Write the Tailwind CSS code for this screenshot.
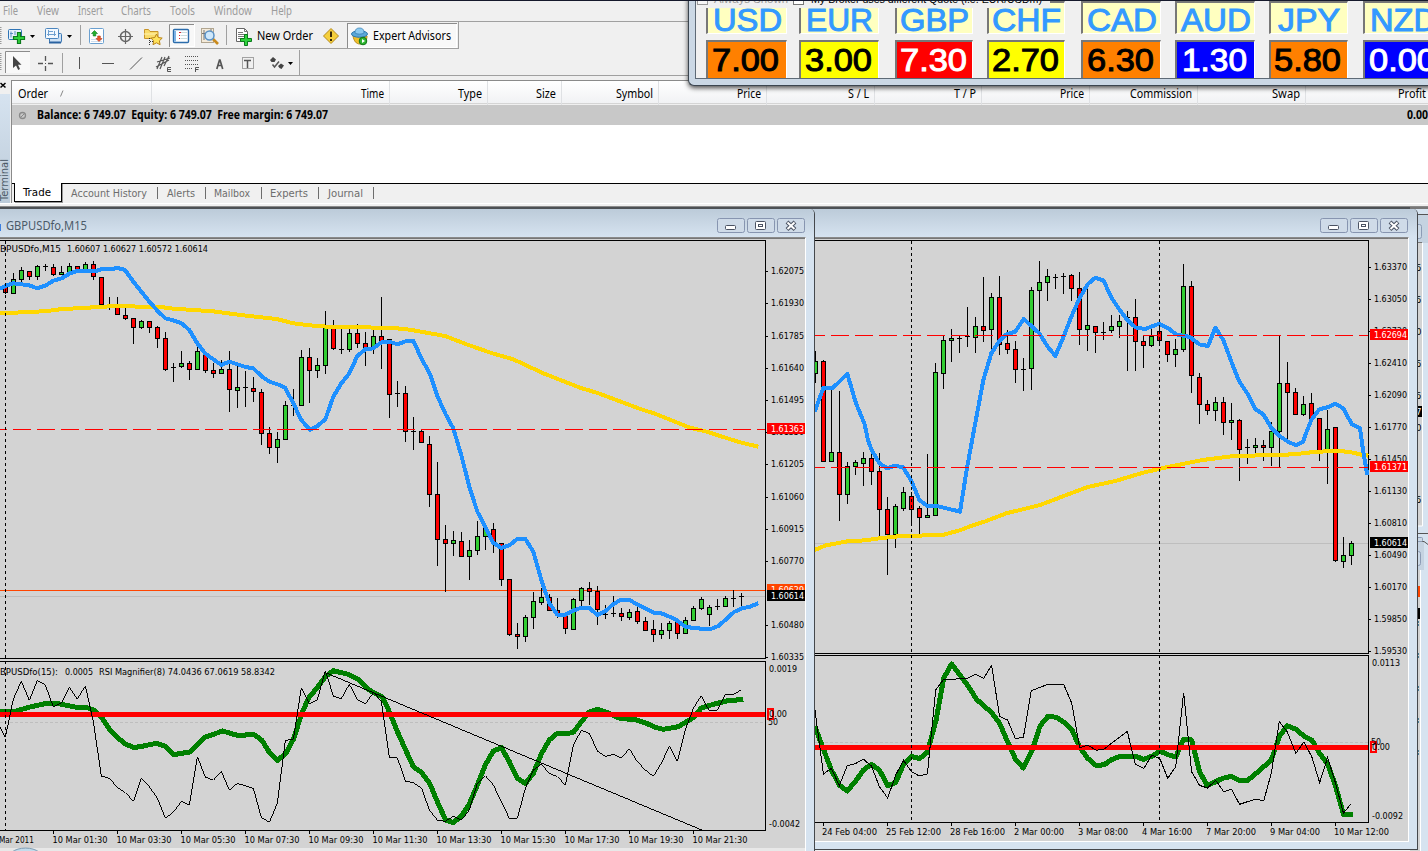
<!DOCTYPE html>
<html lang="en">
<head>
<meta charset="utf-8">
<title>Trading terminal</title>
<script src="https://cdn.jsdelivr.net/npm/@tailwindcss/browser@4"></script>
</head>
<body class="w-[1428px] h-[851px] overflow-hidden bg-[#f0f0f0] font-['Noto_Sans','Open_Sans',sans-serif] text-[12px] text-black">
<div class="relative flex flex-col w-[1428px] h-[851px] overflow-hidden border-t border-[#15192b]">

  <!-- Menu -->
  <nav class="flex items-center h-[21px] shrink-0 border-b border-[#a0a0a0] pl-[3px] text-[12px] leading-none text-[#9c9c9c] whitespace-nowrap">
    <span class="w-[34px]"><span data-w="15">File</span></span>
    <span class="w-[41px]"><span data-w="22">View</span></span>
    <span class="w-[43px]"><span data-w="25">Insert</span></span>
    <span class="w-[49px]"><span data-w="30">Charts</span></span>
    <span class="w-[44px]"><span data-w="25">Tools</span></span>
    <span class="w-[57px]"><span data-w="38">Window</span></span>
    <span data-w="21">Help</span>
  </nav>

  <!-- Standard toolbar -->
  <div class="flex h-[27px] shrink-0 w-[459px] border-b border-r border-[#a0a0a0]">
    <svg class="w-[40px] h-[26px]" viewBox="0 22 40 26">
      <path d="M.5 27v18" stroke="#999" stroke-width="2" stroke-dasharray="1 1"/>
      <rect x="8.500" y="29.500" width="13" height="10" rx="1" fill="#e6f1fb" stroke="#2f74b5"/><path d="M11 31.500v6M10 33.500h3M15 31v4M14 36.500h4" stroke="#5b8fc2" fill="none"/>
      <path d="M17.500 32.500h3v4h4v3h-4v4h-3v-4h-4v-3h4z" fill="#2fd13c" stroke="#0b7a1c" stroke-width="1.200"/>
      <path d="M30 35h5l-2.500 3z" fill="#000"/>
    </svg>
    <svg class="w-[37px] h-[26px]" viewBox="40 22 37 26">
      <rect x="49.500" y="33.500" width="12" height="9" rx="1" fill="#cfe2f5" stroke="#3b78b4"/><path d="M49 42.500h12" stroke="#2a62a0" stroke-width="2"/>
      <rect x="45.500" y="28.500" width="13" height="10" rx="1" fill="#f2f8fe" stroke="#4c86bf"/><path d="M48.500 30v6M47 34.500h9M48 31.500h5M54.500 31v5" stroke="#6fa0d0" fill="none"/>
      <path d="M67 35h5l-2.500 3z" fill="#000"/>
    </svg>
    <svg class="w-[92px] h-[26px]" viewBox="77 22 92 26">
      <path d="M80.500 25v20" stroke="#a0a0a0"/>
      <rect x="89.500" y="28.500" width="14" height="15" rx="1" fill="#fff" stroke="#6ba0d0"/><path d="M91 41.500h11M91 39.500h11" stroke="#cfdded"/>
      <path d="M94.500 30.500l3 3h-1.700v2.500h-2.600v-2.500h-1.700z" fill="#22b02c" stroke="#137a1c" stroke-width=".6"/><path d="M99 41.500l-3-3h1.700V36h2.600v2.500h1.700z" fill="#f0552a" stroke="#b3330f" stroke-width=".6"/>
      <circle cx="125.500" cy="36.500" r="5" fill="none" stroke="#666" stroke-width="1.600"/><path d="M125.500 29v15M118 36.500h15" stroke="#666" stroke-width="1.200"/>
      <path d="M144.500 38.500v-9h4l1.500 2h8v7z" fill="#f9dc6b" stroke="#c8952a"/><path d="M144 34h13" stroke="#fff3b4"/><path d="M149.500 38v7M150 41.500h4" stroke="#333" stroke-dasharray="1 1"/>
      <path d="M156.500 34l1.800 3.500 3.900.6-2.800 2.700.7 3.900-3.600-1.900-3.500 1.900.7-3.900-2.800-2.700 3.900-.6z" fill="#ffe35c" stroke="#b98316"/>
    </svg>
    <svg class="w-[60px] h-[26px]" viewBox="169 22 60 26">
      <rect x="169.500" y="24.500" width="25" height="22" fill="#f8f8f8" stroke="#fff"/><path d="M169.500 47V24.500H194" stroke="#8c8c8c" fill="none"/>
      <rect x="173.500" y="29.500" width="15" height="13" rx="1" fill="#fff" stroke="#2b6cab" stroke-width="1.400"/><path d="M175 31v10.500" stroke="#7db3e6" stroke-width="2"/><path d="M179 32.500h2M179 35.500h1M179 38.500h1" stroke="#d23"/><path d="M181 32.500h6M180.500 35.500h7M180.500 38.500h7" stroke="#cdd"/>
      <rect x="201.500" y="28.500" width="12" height="14" fill="#f4ead9" stroke="#b0a590"/><path d="M204 30v10M202 33.500h3M211 29v5" stroke="#777"/>
      <path d="M213 39l5 5" stroke="#c98a1c" stroke-width="2.600"/><circle cx="209.500" cy="35.500" r="4.500" fill="#cfe8fb" stroke="#5990c4" stroke-width="1.500"/>
      <path d="M226.500 25v20" stroke="#a0a0a0"/>
    </svg>
    <svg class="w-[28px] h-[26px]" viewBox="229 22 28 26">
      <path d="M236.500 28.500h8l3 3v10h-11z" fill="#fff" stroke="#666"/><path d="M244.500 28.500v3h3M238 32.500h5M238 34.500h7M238 36.500h7M238 38.500h4" stroke="#777" fill="none"/>
      <path d="M244.500 34.500h3v4h4v3h-4v4h-3v-4h-4v-3h4z" fill="#2fd13c" stroke="#0b7a1c"/>
    </svg>
    <div class="w-[57px] pt-[6px] text-[12px] leading-[16px] whitespace-nowrap"><span data-w="56">New Order</span></div>
    <svg class="w-[33px] h-[26px]" viewBox="314 22 33 26">
      <path d="M331 28.500l7.500 7.500-7.500 7.500-7.500-7.500z" fill="#f5cf3c" stroke="#b58a1c" stroke-linejoin="round"/><path d="M331 31.500v5.500M331 39v2" stroke="#3c2c08" stroke-width="2"/>
    </svg>
    <div class="flex h-[25px] w-[110px] mt-px bg-[#f8f8f8] border-t border-l border-[#8c8c8c] shadow-[inset_-1px_-1px_0_#fff]">
      <svg class="w-[25px] h-[24px] shrink-0" viewBox="348 24 25 24">
        <path d="M353 36c1 5 3 8 7 8 5 0 7-4 7-8z" fill="#f0bf2c" stroke="#b58a1c"/><ellipse cx="359.500" cy="34" rx="8" ry="3.300" fill="#5aa7d8" stroke="#2f78ad"/><path d="M355 33c0-4 2-5 4.500-5s4.500 1 4.500 5c-2 1.500-7 1.500-9 0z" fill="#8ccaf0" stroke="#2f78ad" stroke-width=".7"/>
        <circle cx="363" cy="41" r="3.800" fill="#2db52f" stroke="#0d7515"/><path d="M362 39v4l3-2z" fill="#fff"/>
      </svg>
      <div class="pt-[4px] text-[12px] leading-[16px] whitespace-nowrap"><span data-w="78">Expert Advisors</span></div>
    </div>
  </div>

  <!-- Line studies toolbar -->
  <div class="flex h-[27px] shrink-0 border-b border-[#a0a0a0]">
    <svg class="w-[300px] h-[26px]" viewBox="0 49 300 26" fill="none" stroke="#555">
      <path d="M.5 53v18" stroke="#999" stroke-width="2" stroke-dasharray="1 1"/>
      <rect x="5" y="51" width="25" height="22" fill="#f8f8f8" stroke="none"/><path d="M5.500 73V51.500H30" stroke="#8c8c8c"/>
      <path d="M13 56v12l3-2.500 2.200 4.500 1.800-1-2-4.300h3.500z" fill="#444" stroke="none"/>
      <path d="M45.500 56v5M45.500 66v5M38 63.500h5M48 63.500h5" stroke-width="1.300"/><path d="M45 63.500h1"/>
      <path d="M62.500 53v20" stroke="#a0a0a0"/>
      <path d="M79.500 57v12M102 63.500h12M130 69.500l12-12"/>
      <path d="M156 67l13-7M157 62l13-4M157 69l5-12M160 69l5-12M164 66l5-10" stroke-width="1.200"/>
      <path d="M171 67.500h-3.500v4h3.500M168 69.500h3" />
      <path d="M185 56.500h14M185 60.500h14M185 64.500h14M185 68.500h8" stroke-dasharray="1 1"/><path d="M195.500 72v-4.500h3.500M196 69.500h2.500"/>
      <path d="M216.800 69l2.700-9h.5l2.700 9M217.500 65.500h4.500" stroke-width="1.700"/>
      <rect x="242.500" y="57.500" width="11" height="11" stroke-dasharray="1 1"/><path d="M244 60.500h7M247.500 60.500V68" stroke-width="1.500"/>
      <path d="M270 60l3-3 3 2.500-1.500 2.500h-3zM278 66l3-2.500 3 2-2.500 3.500-2-1z" fill="#444" stroke="none"/><path d="M272.500 64.500l2 2.500 4.500-5.500" stroke-width="1.500"/>
      <path d="M288 62h5l-2.500 3z" fill="#000" stroke="none"/>
      <path d="M299.500 50v25" stroke="#a0a0a0"/>
    </svg>
  </div>

  <!-- Terminal -->
  <section class="flex h-[123px] mt-[4px] shrink-0">
    <div class="w-[11px] shrink-0 flex flex-col">
      <svg class="w-[11px] h-[14px]" viewBox="0 80 11 14"><path d="M.5 83l5 4.500M5.500 83l-5 4.500" stroke="#000" stroke-width="1.500"/></svg>
      <svg class="w-[10px] h-[109px]" viewBox="0 94 10 109">
        <defs><linearGradient id="side" x2="0" y2="1"><stop stop-color="#d6e3f0"/><stop offset="1" stop-color="#bccbd9"/></linearGradient></defs>
        <rect y="94" width="10" height="109" fill="url(#side)"/>
        <text transform="translate(8 201) rotate(-90)" textLength="42" lengthAdjust="spacingAndGlyphs" font-size="11" fill="#4a5866" font-family="DejaVu Sans Condensed, DejaVu Sans, sans-serif">Terminal</text>
      </svg>
    </div>
    <div class="flex-1 flex flex-col border-l border-t border-[#8a8a8a]">
      <div class="grid grid-cols-[140px_238px_98px_74px_97px_108px_108px_107px_108px_108px_108px_122px] h-[23px] bg-gradient-to-b from-white to-[#f1f2f4] border-b border-[#d5d5d5] text-[12px] leading-[25px] text-right whitespace-nowrap *:border-r *:border-[#dfe1e4] *:pr-[5px]">
        <div class="flex gap-[12px] pl-[6px]"><span data-w="30">Order</span><svg class="w-[6px] h-[7px] mt-[9px]" viewBox="0 0 6 7"><path d="M.5 6.500L3 .5" stroke="#888" fill="none"/></svg></div>
        <div><span data-w="23">Time</span></div><div><span data-w="24">Type</span></div><div><span data-w="20">Size</span></div><div><span data-w="37">Symbol</span></div><div><span data-w="24">Price</span></div><div><span data-w="21">S / L</span></div><div><span data-w="22">T / P</span></div><div><span data-w="24">Price</span></div><div><span data-w="62">Commission</span></div><div><span data-w="28">Swap</span></div><div class="!pr-[2px] !border-r-0"><span data-w="28">Profit</span></div>
      </div>
      <div class="flex items-center h-[20px] mt-px bg-[#c8c8c8] text-[12px] font-bold whitespace-pre leading-[16px]">
        <svg class="w-[25px] h-[20px]" viewBox="12 105 25 20"><circle cx="22.500" cy="115.500" r="3" fill="none" stroke="#8a8a8a" stroke-width="1.300"/><path d="M20.500 117.500l4-4" stroke="#8a8a8a"/></svg>
        <span data-w="291">Balance: 6 749.07  Equity: 6 749.07  Free margin: 6 749.07</span>
        <span class="ml-auto" data-w="21">0.00</span>
      </div>
      <div class="flex-1 bg-white border-b border-black"></div>
      <div class="flex items-start h-[19px] text-[11px] leading-[19px] text-[#6d6d6d] font-['DejaVu_Sans_Condensed','DejaVu_Sans',sans-serif] whitespace-nowrap">
        <div class="h-[19px] -mt-px ml-[2px] w-[48px] bg-white border-x border-b border-black pl-[8px] text-black leading-[20px] shadow-[1px_1px_0_#999]"><span data-w="28">Trade</span></div>
        <span class="w-[86px] ml-[9px]"><span data-w="76">Account History</span></span>
        <span class="h-[12px] w-px mt-[3px] bg-[#6d6d6d]"></span><span class="w-[47px] pl-[9px]"><span data-w="28">Alerts</span></span>
        <span class="h-[12px] w-px mt-[3px] bg-[#6d6d6d]"></span><span class="w-[55px] pl-[8px]"><span data-w="36">Mailbox</span></span>
        <span class="h-[12px] w-px mt-[3px] bg-[#6d6d6d]"></span><span class="w-[56px] pl-[8px]"><span data-w="38">Experts</span></span>
        <span class="h-[12px] w-px mt-[3px] bg-[#6d6d6d]"></span><span class="w-[54px] pl-[9px]"><span data-w="35">Journal</span></span>
        <span class="h-[12px] w-px mt-[3px] bg-[#6d6d6d]"></span>
      </div>
    </div>
  </section>
  <div class="h-[3px] shrink-0 border-t border-white"></div>

  <!-- Chart windows -->
  <main class="relative flex-1 border-t border-[#8a8a8a] bg-[#f0f0f0]">
    <div class="absolute left-0 top-0 w-full h-[2px] bg-[#4c5054]"></div>

    <!-- Windows further back, visible at the right edge -->
    <svg class="absolute left-[1410px] top-0 w-[18px] h-[644px]" viewBox="1410 207 18 644">
      <rect x="1410" y="207" width="18" height="644" fill="#d6e3f0"/>
      <rect x="1410" y="207" width="18" height="2" fill="#777"/>
      <rect x="1417" y="214" width="11" height="1" fill="#555"/>
      <rect x="1410" y="215" width="18" height="28" fill="#c5d3e1"/>
      <rect x="1410.500" y="224.500" width="11" height="14" rx="2" fill="#ccd9e6" stroke="#8c9cb5"/>
      <rect x="1410" y="243" width="13" height="283" fill="#d3d3d3"/><path d="M1422.500 243v283H1410" stroke="#fff" fill="none"/><path d="M1410 242.500h12" stroke="#777"/>
      <rect x="1410" y="406" width="12" height="11" fill="#000"/>
      <g font-family="DejaVu Sans Condensed, sans-serif" font-size="9.500"><text x="1416" y="271">5</text><text x="1416" y="303">5</text><text x="1416" y="335">0</text><text x="1416" y="367">5</text><text x="1416" y="399">5</text><text x="1416" y="415" fill="#fff">7</text><text x="1416" y="431">0</text><text x="1416" y="503">5</text></g>
      <path d="M1410 533.500h18M1417 541.500h7l4 3" stroke="#555" fill="none"/><rect x="1410" y="542" width="14" height="28" fill="#c5d3e1"/><rect x="1410.500" y="551.500" width="10" height="14" rx="2" fill="#ccd9e6" stroke="#8c9cb5"/><rect x="1410.500" y="537.500" width="12" height="4" rx="1" fill="#ccd9e6" stroke="#8c9cb5"/>
      <rect x="1410" y="570" width="11" height="281" fill="#d3d3d3"/><path d="M1420.500 570v281" stroke="#fff"/>
      <rect x="1410" y="586" width="10" height="11" fill="#ff4500"/><rect x="1410" y="608" width="10" height="11" fill="#000"/>
      <path d="M1418.500 621v6M1418.500 653v6M1418.500 686v6M1418.500 718v6M1418.500 750v6" stroke="#4a7d96" stroke-dasharray="2 1"/>
    </svg>

    <!-- H4 chart window -->
    <article class="absolute left-[800px] top-[2px] w-[618px] h-[641px] bg-[#d6e3f0] border-r border-b border-[#45484c] rounded-tr-[5px] flex flex-col">
      <header class="h-[28px] shrink-0 bg-gradient-to-b from-[#bccbd9] to-[#d6e3f0] rounded-tr-[5px] flex justify-end gap-[2px] pt-[9px] pr-[9px]">
        <svg class="w-[88px] h-[15px]" viewBox="0 0 88 15"><use href="#winbtns"/></svg>
      </header>
      <svg class="w-[609px] h-[605px] border-t border-t-[#8a8a8a] border-r border-b border-r-white border-b-white" viewBox="800 238 608 603" id="right">
        <rect x="800" y="238" width="609" height="604" fill="#d3d3d3"/>
        <path d="M800 238.500h609" stroke="#777"/>
        <path d="M800 240.500h568.500v413H800M800 655.500h568.500v167H800" fill="none" stroke="#000" shape-rendering="crispEdges"/>
        <path d="M800 543.500h568" stroke="#bebebe"/>
        <g id="candlesR" shape-rendering="crispEdges"></g>
        <g fill="none" shape-rendering="crispEdges">
          <g transform="translate(806 430) scale(.39667 .33333)"><polyline vector-effect="non-scaling-stroke" stroke="#ffd700" stroke-width="4" points="22,360 50,346 105,334 150,331 185,325 240,318 345,315 390,300 420,286 450,275 505,250 590,225 650,198 710,171 780,153 850,128 900,114 950,102 1000,90 1080,78 1150,76 1230,73 1280,66 1340,62 1375,67 1400,74 1418,77"/></g>
          <g transform="translate(806 200) scale(.33333)"><polyline vector-effect="non-scaling-stroke" stroke="#1e90ff" stroke-width="4" stroke-linejoin="round" points="26,635 52,564 80,564 124,522 150,610 175,670 186,720 196,748 220,790 244,805 268,797 291,802 316,842 340,900 364,918 393,918 462,935 482,810 502,700 532,540 556,460 580,423 600,404 628,395 653,357 700,400 725,440 748,468 772,412 796,350 820,296 845,253 868,233 893,242 916,293 940,328 964,360 988,382 1017,387 1060,371 1087,385 1110,403 1152,411 1180,433 1206,438 1228,383 1252,420 1276,485 1300,545 1324,580 1349,628 1372,643 1396,683 1422,709 1446,725 1470,736 1491,725 1500,700 1516,660 1540,628 1564,622 1588,611 1612,625 1637,672 1662,685 1671,750 1684,825"/></g>
          <path d="M807 335.500h561M807 467.500h561" stroke="#f00" stroke-dasharray="18 6"/>
          <path d="M800 742.500h568" stroke="#bebebe" stroke-dasharray="3 2"/>
          <g transform="translate(806 640) scale(.39667 .33333)">
            <polyline vector-effect="non-scaling-stroke" stroke="#008000" stroke-width="5" stroke-linejoin="round" points="22,258 44,328 64,390 84,435 104,453 124,425 145,390 165,373 185,390 206,437 226,428 246,372 266,349 286,356 306,337 328,240 347,115 367,72 388,105 410,140 430,178 468,218 488,250 508,305 528,357 548,384 570,330 590,258 610,229 632,232 650,247 670,268 690,322 710,355 732,377 752,374 772,358 793,349 830,348 850,358 872,349 892,333 912,344 932,351 952,298 972,300 992,395 1012,437 1050,415 1072,409 1093,421 1113,421 1133,402 1173,360 1193,290 1213,257 1235,268 1255,288 1275,300 1295,340 1315,372 1335,438 1355,523 1380,523"/>
          </g>
          <path d="M800 747.500h568" stroke="#f00" stroke-width="5"/>
          <g transform="translate(806 640) scale(.39667 .33333)">
            <polyline vector-effect="non-scaling-stroke" stroke="#000" stroke-width="1" points="22,205 44,402 64,385 84,437 104,377 124,371 145,358 165,378 185,440 206,474 226,405 246,361 266,395 286,408 306,402 327,150 347,118 370,118 408,114 428,103 448,115 468,76 488,229 508,240 528,296 548,292 568,152 590,142 610,133 650,134 670,190 690,323 710,315 732,331 752,327 772,308 810,274 830,373 852,385 872,345 892,356 912,415 932,380 952,158 972,395 992,436 1012,444 1033,421 1053,455 1073,448 1093,493 1113,485 1133,478 1154,482 1173,400 1193,245 1213,275 1235,340 1255,306 1275,350 1295,428 1315,352 1335,430 1355,520 1373,492"/>
          </g>
          <path d="M911.500 241v581M1159.500 241v581" stroke="#000" stroke-dasharray="3 3"/>
        </g>
        <g id="axisR" font-family="DejaVu Sans Condensed, DejaVu Sans, sans-serif" font-size="9.500"></g>
      </svg>
    </article>

    <!-- M15 chart window -->
    <article class="absolute left-0 top-[2px] w-[815px] h-[644px] bg-[#d6e3f0] border-r border-[#45484c] rounded-tr-[5px] flex flex-col">
      <header class="h-[28px] shrink-0 bg-gradient-to-b from-[#bccbd9] to-[#d6e3f0] rounded-tr-[5px] flex items-start justify-between pt-[9px] pr-[9px] text-[13px] leading-[15px] text-[#4b5a68]">
        <div class="flex gap-[5px]"><span class="w-px h-[7px] mt-[6px] bg-[#3b7fe0]"></span><span data-w="81">GBPUSDfo,M15</span></div>
        <svg class="w-[88px] h-[15px]" viewBox="0 0 88 15">
          <g id="winbtns"><g fill="#cfdbe8" stroke="#8795b0"><rect x=".5" y=".5" width="27" height="14" rx="2"/><rect x="30.500" y=".5" width="27" height="14" rx="2"/><rect x="60.500" y=".5" width="27" height="14" rx="2"/></g>
          <g fill="#fff" stroke="#4a5262"><rect x="8.500" y="7.500" width="10" height="4" rx="1"/><rect x="38.500" y="3.500" width="10" height="8" rx="1"/><rect x="41.500" y="6.500" width="4" height="2"/></g>
          <path d="M70 4l8 7.500M78 4l-8 7.500" stroke="#4a5262" stroke-width="4"/><path d="M70.500 4.500l7 6.500M77.500 4.500l-7 6.500" stroke="#fff" stroke-width="2"/></g>
        </svg>
      </header>
      <svg class="w-[806px] h-[616px] border-t border-t-[#8a8a8a] border-r border-r-white" viewBox="0 238 805 615" id="left">
        <rect x="0" y="238" width="806" height="610" fill="#d3d3d3"/><rect x="0" y="848" width="806" height="5" fill="#e8e8e8"/>
        <path d="M0 238.500h806" stroke="#777"/>
        <path d="M12 852a17 10 0 0 1 27 0z" fill="#c3dcec" stroke="#7e9db3"/>
        <path d="M0 240.500h765.500v418H0M0 661.500h765.500v169H0" fill="none" stroke="#000" shape-rendering="crispEdges"/>
        <rect x="0" y="596" width="765" height="1" fill="#bebebe"/><rect x="0" y="590" width="765" height="1" fill="#ff4500"/>
        <g id="candlesL" shape-rendering="crispEdges"></g>
        <g fill="none" shape-rendering="crispEdges">
          <g transform="translate(0 230) scale(.33333)" stroke-width="12" stroke-linejoin="round">
            <polyline stroke="#ffd700" points="0,250 110,245 160,241 185,237 230,235 330,229 400,228 410,231 490,232 520,236 640,244 730,256 830,267 880,280 930,286 980,290 1090,292 1180,294 1230,299 1285,309 1335,318 1400,343 1480,371 1540,388 1630,430 1740,473 1790,488 1910,533 1970,553 2070,593 2120,605 2220,637 2275,650"/>
            <polyline stroke="#1e90ff" points="0,177 16,168 40,160 88,166 112,175 136,167 160,152 185,145 210,130 232,123 285,124 305,117 340,117 350,113 375,120 400,155 424,185 448,215 472,242 496,265 520,271 545,280 568,300 592,340 615,370 640,388 664,405 688,395 736,411 760,415 784,438 808,455 835,464 856,474 880,520 904,570 930,600 952,588 976,568 1000,500 1024,460 1048,430 1072,378 1096,358 1120,355 1144,337 1168,335 1192,343 1216,334 1240,332 1264,385 1289,430 1313,500 1337,553 1360,595 1385,680 1408,770 1432,845 1456,892 1480,938 1504,954 1528,946 1552,927 1576,927 1600,965 1624,1050 1648,1120 1672,1154 1696,1154 1720,1142 1744,1133 1768,1134 1792,1155 1816,1144 1840,1122 1864,1109 1888,1110 1912,1123 1936,1136 1960,1148 1984,1150 2008,1160 2032,1172 2056,1190 2080,1194 2104,1196 2130,1198 2155,1188 2178,1168 2202,1146 2226,1135 2250,1130 2275,1120"/>
          </g>
          <path d="M-11 429.500h776" stroke="#f00" stroke-dasharray="18 6"/>
          <path d="M0 722.500h765" stroke="#bebebe" stroke-dasharray="3 2"/>
          <g transform="translate(0 650) scale(.33333)"><polyline stroke="#008000" stroke-width="15" stroke-linejoin="round" points="0,186 50,183 85,172 140,160 180,162 230,172 265,174 285,182 305,203 328,237 352,262 376,282 402,293 430,288 468,280 496,289 520,314 545,310 570,306 615,262 640,253 668,243 712,256 762,254 785,270 808,307 833,331 858,310 880,268 904,195 925,145 950,115 976,80 1000,62 1045,73 1075,88 1098,112 1120,128 1146,140 1165,178 1190,240 1216,298 1240,350 1265,368 1290,402 1312,455 1337,510 1360,518 1384,498 1408,462 1432,405 1456,345 1480,303 1504,293 1528,335 1552,385 1576,401 1600,370 1625,310 1648,270 1672,250 1696,252 1720,247 1744,215 1768,186 1792,178 1820,187 1860,205 1910,210 1940,220 1965,232 1990,238 2035,230 2080,203 2104,174 2140,163 2180,153 2230,148"/></g>
          <path d="M0 714.500h765" stroke="#f00" stroke-width="5"/>
          <g transform="translate(0 650) scale(.33333)" stroke="#000" stroke-width="3"><polyline points="0,232 16,262 40,147 64,94 88,151 112,92 136,105 160,171 185,158 208,112 232,147 256,108 280,215 304,378 328,385 352,412 376,428 401,454 424,385 448,410 472,445 496,504 520,487 544,454 568,465 592,320 616,381 640,391 664,364 688,420 712,400 760,415 784,502 808,517 832,460 856,271 880,268 904,113 928,162 952,149 976,62 1000,138 1024,146 1048,103 1072,148 1096,162 1120,128 1144,153 1168,322 1192,323 1216,393 1240,398 1265,415 1288,480 1312,510 1336,514 1360,499 1384,511 1408,480 1432,400 1456,377 1480,405 1504,455 1528,505 1552,505 1576,415 1600,360 1624,343 1648,370 1672,380 1696,405 1720,285 1744,241 1768,250 1792,303 1816,319 1840,313 1864,325 1888,296 1912,335 1936,360 1960,379 1984,340 2008,288 2032,334 2056,240 2080,175 2104,137 2128,183 2152,181 2176,133 2200,133 2222,121"/><path d="M976 68L2105 540"/></g>
          <path d="M5.500 241v589" stroke="#000" stroke-dasharray="3 3"/>
        </g>
        <g id="axisL" font-family="DejaVu Sans Condensed, DejaVu Sans, sans-serif" font-size="9.500"></g>
      </svg>
    </article>
  </main>

  <!-- Currency strength window -->
  <aside class="absolute left-[688px] -top-[6px] w-[760px] h-[91px] rounded-bl-[6px] bg-[#cbd8e5] border-l border-b border-[#3c4650] pl-[6px] pb-[6px] shadow-[0_2px_5px_rgba(0,0,0,.7)]">
    <div class="relative h-full bg-[#f0f0f0] border-l border-b border-[#5e6a76] overflow-hidden">
      <div id="strength" class="flex pt-[6px] pl-[10px] font-['Liberation_Sans',Arial,sans-serif] text-[32px] text-center whitespace-nowrap"></div>
      <div class="absolute left-0 top-0 w-[354px] h-[13px] bg-[#f0f0f0] flex items-end font-['Liberation_Sans',Arial,sans-serif] text-[11px] leading-[12px] whitespace-nowrap pb-[3px]">
        <span class="w-[11px] h-[12px] ml-px bg-[#f6f6f6] border border-[#999]"></span><span class="ml-[6px] text-[#9a9a9a]" data-w="74">Always Shown</span>
        <span class="w-[11px] h-[12px] ml-[5px] bg-white border border-[#777]"></span><span class="ml-[7px]" data-w="231">My Broker uses different Quote (i.e. EUR/USDm)</span>
      </div>
    </div>
  </aside>
</div>

<template id="cell">
  <div class="shrink-0 flex flex-col gap-[6px]">
    <div class="h-[33px] bg-[#ffffc0] border-t-2 border-l-2 border-r border-b border-t-[#777] border-l-[#777] border-r-white border-b-white text-[#3399ff] leading-[34px] [-webkit-text-stroke:1px]"><span></span></div>
    <div class="h-[40px] border-t-2 border-l-2 border-r border-t-[#777] border-l-[#777] border-r-white leading-[36px] pr-[3px] [-webkit-text-stroke:1.3px]"><span></span></div>
  </div>
</template>

<script>
const NS = 'http://www.w3.org/2000/svg';
function el(parent, name, attrs, text) {
  const e = document.createElementNS(NS, name);
  for (const k in attrs) e.setAttribute(k, attrs[k]);
  if (text !== undefined) e.textContent = text;
  parent.appendChild(e);
  return e;
}
// Candle rows: colour, high, low, body top, body bottom (k = flat body). Heights are in thirds of a pixel.
function candles(id, x0, y0, rows) {
  const g = document.getElementById(id), Y = v => y0 + Math.floor(v / 3);
  rows.trim().split(/[;\n]+/).forEach((r, i) => {
    const [c, h, l, a, b] = r.trim().split(/\s+/), x = x0 + 8 * i;
    el(g, 'rect', {x, y: Y(h), width: 1, height: Math.max(1, Y(l) - Y(h)), fill: '#000'});
    if (c === 'k') el(g, 'rect', {x: x - 2, y: Y(a), width: 5, height: 1, fill: '#000'});
    else el(g, 'rect', {x: x - 1.5, y: Y(a) + .5, width: 4, height: Math.max(1, Y(b) - Y(a)), fill: c === 'r' ? '#f00' : '#32cd32', stroke: '#000'});
  });
}
candles('candlesL', 5, 230, `r 165 192 170 187;g 129 191 148 190;g 111 156 122 149;r 123 150 124 140;g 105 150 109 140;k 102 125 110;r 102 138 112 133;g 108 137 127 133;g 99 130 109 127;r 108 123 110 120;g 96 122 103 121;r 93 150 103 140;r 141 226 142 224;k 201 240 224;r 201 257 229 254;r 234 272 255 266;r 264 342 265 293;g 270 299 274 293;r 273 309 274 293;r 288 354 292 325;r 306 423 325 419;k 399 456 413;g 363 416 400 410;r 393 450 400 419;g 348 422 364 419;r 370 429 372 422;r 399 444 421 431;g 390 434 418 431;r 363 546 418 479;g 405 534 472 482;k 423 531 473;r 441 516 475 485;r 477 645 487 611;r 591 672 610 653;g 606 699 628 653;g 513 630 526 629;k 477 558 526;g 360 530 382 527;r 354 519 382 422;g 384 444 406 422;g 243 432 293 407;r 270 360 293 356;k 294 372 359;g 294 366 310 359;r 282 354 310 341;r 306 408 340 354;g 300 372 319 356;r 201 417 319 335;r 327 564 329 494;k 453 531 490;r 468 636 490 605;k 561 660 603;r 600 638 604 638;r 618 831 643 794;r 696 1008 793 929;r 885 1086 927 941;g 903 978 930 941;r 906 980 934 980;g 930 1050 961 980;g 873 975 919 962;g 885 960 895 920;r 879 969 897 941;r 939 1068 940 1049;r 1047 1218 1048 1214;r 1179 1257 1213 1220;g 1155 1236 1162 1220;g 1086 1197 1114 1163;g 1074 1125 1102 1116;r 1092 1143 1102 1142;r 1104 1164 1141 1152;r 1150 1212 1154 1196;g 1106 1200 1108 1197;g 1071 1134 1075 1112;r 1056 1125 1075 1085;r 1068 1185 1084 1139;k 1125 1167 1152;k 1098 1161 1151;r 1134 1173 1150 1160;g 1137 1170 1147 1163;r 1130 1182 1143 1175;r 1161 1203 1174 1200;r 1170 1236 1198 1214;g 1179 1227 1200 1214;g 1173 1227 1180 1202;r 1170 1227 1176 1211;g 1161 1212 1171 1211;g 1128 1173 1135 1172;g 1101 1140 1108 1136;g 1125 1190 1132 1154;k 1107 1140 1129;g 1098 1131 1105 1130;k 1080 1131 1106;k 1089 1128 1099`);
candles('candlesR', 815, 200, `g 453 549 485 521;r 480 788 484 785;g 570 788 757 785;r 573 963 757 884;g 788 912 798 884;g 780 825 787 800;g 756 858 775 791;r 760 855 775 815;r 759 1010 813 929;r 891 1125 928 1002;g 912 1044 919 1002;g 861 933 877 924;r 876 972 889 929;r 918 1005 925 953;g 762 954 946 953;g 489 948 517 947;g 407 567 421 521;g 387 486 415 422;k 408 459 414;k 321 441 410;g 351 459 379 413;r 231 426 379 390;g 279 465 292 389;r 228 465 292 434;r 390 462 430 449;r 423 549 448 509;k 474 573 507;g 261 570 271 506;g 183 400 247 272;g 207 303 229 248;k 222 267 231;k 219 282 228;r 222 303 226 266;r 216 435 265 389;g 260 453 376 389;r 378 459 379 398;k 366 420 396;g 345 399 379 392;g 345 414 364 380;k 333 513 352;r 297 513 352 424;r 408 504 424 437;g 385 441 409 437;r 378 430 394 422;r 424 486 424 464;g 417 501 447 463;g 192 456 259 448;r 243 579 259 527;r 519 672 532 614;r 600 645 613 632;g 591 663 607 632;r 591 705 607 667;g 609 720 661 667;r 657 843 661 749;k 717 792 743;g 714 768 736 742;r 720 783 736 742;g 668 798 694 742;g 405 802 549 695;r 486 717 549 577;r 564 645 577 643;g 588 648 613 643;r 579 657 610 656;r 655 783 656 755;g 630 852 688 752;r 681 1086 683 1082;g 1011 1104 1066 1085;g 1023 1095 1030 1067`);

function label(g, x, yc, w, t, fill) {
  el(g, 'text', {x, y: yc + 3, textLength: w, lengthAdjust: 'spacingAndGlyphs', fill: fill || '#000', 'xml:space': 'preserve'}, t);
}
function tag(g, x, y, t, bg, fg) {
  el(g, 'rect', {x, y, width: 38, height: 11, fill: bg});
  label(g, x + 4, y + 5.5, 33, t, fg || '#fff');
}
const tick = (g, x, y, w, h) => el(g, 'rect', {x, y, width: w, height: h, fill: '#000', 'shape-rendering': 'crispEdges'});

const L = document.getElementById('axisL');
[['1.62075',271],['1.61930',303],['1.61785',336],['1.61640',368],['1.61495',400],['1.61350',432],['1.61205',464],['1.61060',497],['1.60915',529],['1.60770',561],['1.60480',625],['1.60335',657]].forEach(([t, y]) => { label(L, 771, y, 33, t); tick(L, 766, y, 2, 1); });
tag(L, 767, 423, '1.61363', '#f00'); tag(L, 767, 584, '1.60629', '#ff4500'); tag(L, 767, 590, '1.60614', '#000');
label(L, 0, 249, 61, 'BPUSDfo,M15'); label(L, 67, 249, 141, '1.60607 1.60627 1.60572 1.60614');
label(L, 0, 672, 58, 'BPUSDfo(15):'); label(L, 65, 672, 28, '0.0005'); label(L, 99, 672, 176, 'RSI Magnifier(8) 74.0436 67.0619 58.8342');
label(L, 769, 669, 28, '0.0019'); label(L, 769, 824, 31, '-0.0042');
el(L, 'rect', {x: 768, y: 709, width: 5, height: 10, fill: '#d3d3d3', stroke: '#f00', 'stroke-width': 2});
label(L, 769, 714, 18, '0.00'); label(L, 768, 722, 10, '50');
label(L, -1, 840, 35, 'Mar 2011');
['01','03','05','07','09','11','13','15','17','19','21'].forEach((h, i) => { const x = 53 + 64 * i; tick(L, x, 831, 1, 3); label(L, x - .5, 840, 55, `10 Mar ${h}:30`); });

const R = document.getElementById('axisR');
[['1.63370',267],['1.63050',299],['1.62730',331],['1.62410',363],['1.62090',395],['1.61770',427],['1.61450',459],['1.61130',491],['1.60810',523],['1.60490',555],['1.60170',587],['1.59850',619],['1.59530',651]].forEach(([t, y]) => { label(R, 1374, y, 33, t); tick(R, 1369, y, 2, 1); });
tag(R, 1370, 329, '1.62694', '#f00'); tag(R, 1370, 461, '1.61371', '#f00'); tag(R, 1370, 537, '1.60614', '#000');
label(R, 1372, 663, 28, '0.0113'); label(R, 1372, 816, 31, '-0.0092');
el(R, 'rect', {x: 1371, y: 742, width: 5, height: 10, fill: '#d3d3d3', stroke: '#f00', 'stroke-width': 2});
label(R, 1372, 747, 18, '0.00'); label(R, 1371, 742, 10, '50');
['24 Feb 04:00','25 Feb 12:00','28 Feb 16:00','2 Mar 00:00','3 Mar 08:00','4 Mar 16:00','7 Mar 20:00','9 Mar 04:00','10 Mar 12:00'].forEach((t, i) => { const x = 823 + 64 * i; tick(R, x, 823, 1, 3); label(R, x - 1, 832, t.length > 11 ? 55 : 50, t); });

// Strength cells: code, value, width, gap after, value background, value colour, label widths
const box = document.getElementById('strength'), tpl = document.getElementById('cell');
[['USD','7.00',81,12,'#ff8000','#000',69,67],['EUR','3.00',80,16,'#ff0','#000',67,67],['GBP','7.30',78,14,'#f00','#fff',69,67],['CHF','2.70',78,16,'#ff0','#000',69,67],['CAD','6.30',80,14,'#ff8000','#000',70,67],['AUD','1.30',80,14,'#00f','#fff',70,65],['JPY','5.80',79,15,'#ff8000','#000',62,67],['NZD','0.00',80,0,'#00f','#fff',67,67]].forEach(([c, v, w, gap, bg, fg, w1, w2]) => {
  const n = tpl.content.firstElementChild.cloneNode(true);
  n.style.width = w + 'px'; n.style.marginRight = gap + 'px';
  const [a, b] = n.children;
  a.firstElementChild.textContent = c; a.firstElementChild.dataset.w = w1;
  b.style.background = bg; b.style.color = fg;
  b.firstElementChild.textContent = v; b.firstElementChild.dataset.w = w2;
  box.appendChild(n);
});

// Set each label to its designed width, sitting on the line's baseline
document.querySelectorAll('[data-w]').forEach(s => {
  const t = s.textContent, w = s.dataset.w;
  s.textContent = '';
  const v = el(s, 'svg', {width: w, height: 8, class: 'inline-block align-baseline overflow-visible'});
  el(v, 'text', {x: 0, y: 8, textLength: w, lengthAdjust: 'spacingAndGlyphs', fill: 'currentColor', stroke: s.closest('#strength') ? 'currentColor' : 'none', 'stroke-width': s.closest('#strength') ? 1 : 0, 'xml:space': 'preserve', class: 'whitespace-pre'}, t);
});
</script>
</body>
</html>
